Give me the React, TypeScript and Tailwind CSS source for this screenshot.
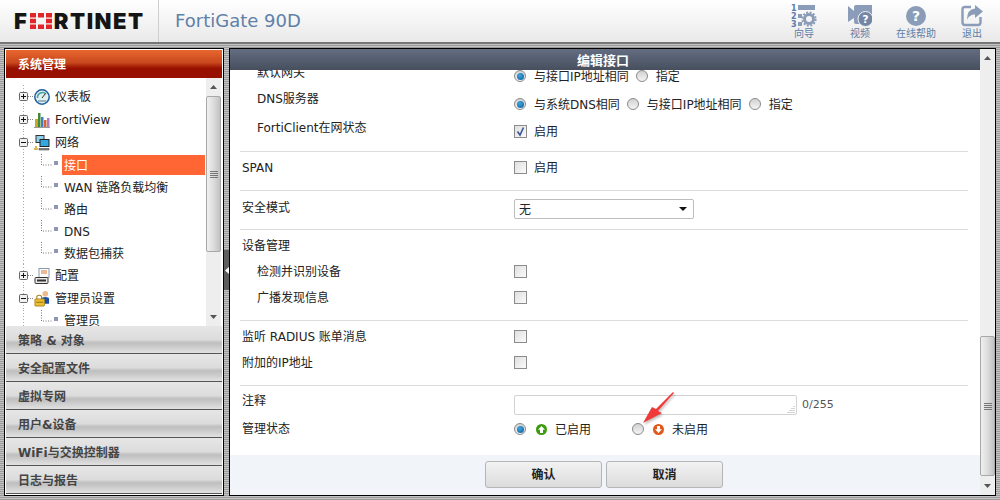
import React from "react";

const FONT = "[font-family:'DejaVu_Sans','Noto_Sans_CJK_SC',sans-serif]";

function Radio({ on }: { on?: boolean }) {
  return (
    <span className="flex h-[12px] w-[12px] shrink-0 items-center justify-center rounded-full border border-[#8a8a8a] bg-gradient-to-b from-[#d2d2d2] to-[#f4f4f4]">
      {on ? <span className="h-[7px] w-[7px] rounded-full bg-[radial-gradient(circle_at_40%_35%,#3fa6df,#0a5a94)]" /> : null}
    </span>
  );
}

function Check({ on }: { on?: boolean }) {
  return (
    <span className="flex h-[13px] w-[13px] shrink-0 items-center justify-center border border-[#8c8c8c] bg-gradient-to-br from-[#dfdfdf] to-[#fbfbfb]">
      {on ? (
        <svg width="11" height="11" viewBox="0 0 11 11">
          <path d="M2.5 5.5 L5 9 L8.5 1.5" fill="none" stroke="#3f5a9c" strokeWidth="1.7" />
        </svg>
      ) : null}
    </span>
  );
}

function Row({ h, left, right }: { h: string; left: React.ReactNode; right: React.ReactNode }) {
  return (
    <div className={`grid grid-cols-[272px_1fr] items-start pl-[12px] ${h}`}>
      {left}
      {right}
    </div>
  );
}

function Hr() {
  return <div className="ml-[10px] mr-[12px] h-px bg-[#dcdcdc]" />;
}

function Arrow({ up }: { up?: boolean }) {
  return (
    <div className="flex h-[18px] shrink-0 items-center justify-center">
      <svg width="7" height="4" viewBox="0 0 7 4">
        {up ? <path d="M0 4 L3.5 0 L7 4 Z" fill="#555" /> : <path d="M0 0 L7 0 L3.5 4 Z" fill="#555" />}
      </svg>
    </div>
  );
}

function Grip() {
  return (
    <div className="flex w-[8px] flex-col gap-[1px]">
      <div className="h-px bg-[#777]" />
      <div className="h-px bg-[#777]" />
      <div className="h-px bg-[#777]" />
      <div className="h-px bg-[#777]" />
    </div>
  );
}

function Thumb({ cls }: { cls: string }) {
  return (
    <div className={`flex shrink-0 items-center justify-center rounded-[2px] border border-[#a8a8a8] bg-gradient-to-r from-[#f0f0f0] via-[#dcdcdc] to-[#c2c2c2] ${cls}`}>
      <Grip />
    </div>
  );
}

function TopGuide({ open, line = true }: { open?: boolean; line?: boolean }) {
  return (
    <svg width="28" height="23" viewBox="0 0 28 23" className="shrink-0">
      {line ? <path d="M17.5 0 V23" stroke="#aaa" strokeDasharray="1 2" /> : null}
      <path d="M22 11.5 H28" stroke="#888" strokeDasharray="1 1" />
      <rect x="13.5" y="7.5" width="8" height="8" rx="1" fill="#f2f2f2" stroke="#666" />
      <path d="M15 11.5 H20" stroke="#111" />
      {open ? null : <path d="M17.5 9 V14" stroke="#111" />}
    </svg>
  );
}

function SubGuide() {
  return (
    <svg width="56" height="22" viewBox="0 0 56 22" className="shrink-0">
      <path d="M17.5 0 V22" stroke="#aaa" strokeDasharray="1 2" />
      <path d="M35.5 0 V11 H46" fill="none" stroke="#777" strokeDasharray="1 1.5" />
      <rect x="48" y="7" width="4" height="4" fill="#8f95b5" />
    </svg>
  );
}

function Top({ icon, label, open, cls }: { icon: React.ReactNode; label: string; open?: boolean; cls: string }) {
  return (
    <div className={`flex items-center ${cls}`}>
      <TopGuide open={open} />
      <span className="flex w-[16px] shrink-0 items-center justify-center">{icon}</span>
      <span className="ml-[5px] whitespace-nowrap text-[#222]">{label}</span>
    </div>
  );
}

function Sub({ label, active, last }: { label: string; active?: boolean; last?: boolean }) {
  return (
    <div className="flex h-[22px] items-center">
      <SubGuide />
      <span className={`mr-px flex h-[20px] flex-1 items-center whitespace-nowrap pl-[2px] ${last ? "" : "pt-[2px]"} ${active ? "bg-[#ff6633] text-white" : "text-[#222]"}`}>{label}</span>
    </div>
  );
}

function Acc({ label }: { label: string }) {
  return (
    <div className="flex h-[28px] items-center border-b border-[#555] bg-[linear-gradient(180deg,#e6e6e6_0%,#dcdcdc_50%,#bfbfbf_62%,#c9c9c9_75%,#e2e2e2_100%)] pl-[12px] pt-[2px] font-bold text-[#444]">
      {label}
    </div>
  );
}

function HeadBtn({ icon, label, cls }: { icon: React.ReactNode; label: string; cls: string }) {
  return (
    <div className={`flex flex-col items-center ${cls}`}>
      <div className="flex h-[24px] items-center justify-center">{icon}</div>
      <span className="whitespace-nowrap text-[10px] leading-[12px] text-[#5d7ea6]">{label}</span>
    </div>
  );
}

function CircleArrow({ up }: { up?: boolean }) {
  return (
    <svg width="11" height="11" viewBox="0 0 11 11" className="shrink-0">
      <circle cx="5.5" cy="5.5" r="5.5" fill={up ? "#3c9a0c" : "#e0581c"} />
      {up ? (
        <path d="M5.5 2 L9 5.8 H7 V9 H4 V5.8 H2 Z" fill="#fff" />
      ) : (
        <path d="M5.5 9 L9 5.2 H7 V2 H4 V5.2 H2 Z" fill="#fff" />
      )}
    </svg>
  );
}

export default function App() {
  return (
    <div className={`relative flex h-[500px] w-[1000px] flex-col overflow-hidden text-[12px] leading-[16px] ${FONT} bg-[repeating-linear-gradient(0deg,#9a9a9a_0,#9a9a9a_1px,#c4c4c4_1px,#c4c4c4_2px)]`}>
      {/* Header */}
      <header className="flex h-[44px] shrink-0 items-center border-b-2 border-[#767676] bg-gradient-to-b from-[#ffffff] to-[#e9e9e9]">
        <div className="flex h-full w-[159px] shrink-0 items-center border-r border-[#cfcfcf] pl-[14px]">
          <span className="[font-family:Inter,sans-serif] text-[22px] font-black leading-none text-[#151515]">F</span>
          <svg width="22" height="16" viewBox="0 0 22 16" className="ml-[3px] shrink-0">
            <path d="M0 0 H6 V4.5 H0 Z M8 0 H14 V4.5 H8 Z M16 0 H22 V4.5 H16 Z M0 5.7 H6 V10.3 H0 Z M16 5.7 H22 V10.3 H16 Z M0 11.5 H6 V16 H0 Z M8 11.5 H14 V16 H8 Z M16 11.5 H22 V16 H16 Z" fill="#e0262a" />
          </svg>
          <span className="ml-[2px] [font-family:Inter,sans-serif] text-[22px] font-black leading-none tracking-[1.5px] text-[#151515]">RTINET</span>
        </div>
        <span className="ml-[16px] text-[18px] text-[#5f80a8]">FortiGate 90D</span>
        <div className="ml-auto flex items-start self-start pt-[4px]">
          <HeadBtn
            cls="w-[56px]"
            label="向导"
            icon={
              <svg width="26" height="24" viewBox="0 0 26 24">
                <text x="0" y="7" fontSize="8" fontWeight="700" fill="#5b7aa8">1</text>
                <text x="0" y="15" fontSize="8" fontWeight="700" fill="#5b7aa8">2</text>
                <text x="0" y="23" fontSize="8" fontWeight="700" fill="#5b7aa8">3</text>
                <path d="M7 1 H24 V6 H7 Z M7 10 H11 V14 H7 Z M7 18 H11 V22 H7 Z" fill="#8a9cb8" />
                <circle cx="18" cy="15" r="4.5" fill="none" stroke="#8a9cb8" strokeWidth="3" />
                <circle cx="18" cy="15" r="6.6" fill="none" stroke="#8a9cb8" strokeWidth="2" strokeDasharray="2 1.5" />
              </svg>
            }
          />
          <HeadBtn
            cls="w-[56px]"
            label="视频"
            icon={
              <svg width="24" height="24" viewBox="0 0 24 24">
                <path d="M0 2 L6 7 V3 Q6 1 8 1 H24 V12 H18 L12 20 H8 Q6 20 6 18 V14 L0 18 Z" fill="#8a9cb8" />
                <circle cx="17.5" cy="15" r="7.5" fill="#7386a5" stroke="#f3f3f3" />
                <text x="17.5" y="19" fontSize="11" fontWeight="700" fill="#fff" textAnchor="middle">?</text>
              </svg>
            }
          />
          <HeadBtn
            cls="w-[56px]"
            label="在线帮助"
            icon={
              <svg width="20" height="20" viewBox="0 0 20 20">
                <circle cx="10" cy="10" r="10" fill="#8a9cb8" />
                <text x="10" y="15" fontSize="14" fontWeight="700" fill="#fff" textAnchor="middle">?</text>
              </svg>
            }
          />
          <HeadBtn
            cls="w-[56px]"
            label="退出"
            icon={
              <svg width="22" height="22" viewBox="0 0 22 22">
                <path d="M10 2 H4 Q1.5 2 1.5 4.5 V17.5 Q1.5 20 4 20 H17 Q19.5 20 19.5 17.5 V12" fill="none" stroke="#8a9cb8" strokeWidth="2.4" />
                <path d="M14 0 L22 6.5 L14 13 V9.5 Q8 9.5 6 15 Q6 4 14 3.5 Z" fill="#8a9cb8" />
              </svg>
            }
          />
        </div>
      </header>

      {/* Body */}
      <div className="flex min-h-0 flex-1 p-[4px]">
        {/* Sidebar */}
        <aside className="flex w-[220px] shrink-0 flex-col overflow-hidden border border-black bg-white p-px">
          <div className="flex h-[28px] shrink-0 items-center bg-[linear-gradient(180deg,#e8672f_0%,#c9481d_45%,#981000_65%,#981000_100%)] pl-[12px] pt-[2px] font-bold text-white">
            系统管理
          </div>
          <div className="flex h-[248px] shrink-0 bg-white">
            <div className="w-[200px] shrink-0 overflow-hidden pt-[7px]">
              <Top
                cls="h-[23px]"
                label="仪表板"
                icon={
                  <svg width="16" height="16" viewBox="0 0 16 16">
                    <circle cx="8" cy="8" r="7.2" fill="#dff0ee" stroke="#1f5f9e" strokeWidth="1.5" />
                    <path d="M3.5 9 A5 5 0 0 1 12 5" fill="none" stroke="#4aa0a0" strokeWidth="1.5" />
                    <path d="M8 9 L11.5 4.5" stroke="#333" />
                    <path d="M4 12 H12" stroke="#7c9ab0" strokeWidth="1.4" />
                  </svg>
                }
              />
              <Top
                cls="h-[23px]"
                label="FortiView"
                icon={
                  <svg width="16" height="16" viewBox="0 0 16 16">
                    <path d="M0 15.5 H16" stroke="#999" />
                    <rect x="1" y="7" width="3" height="8" fill="#c9a52b" />
                    <rect x="4" y="1" width="2.5" height="14" fill="#3f8a3a" />
                    <rect x="7" y="5" width="2.5" height="10" fill="#3d7fc2" />
                    <rect x="10" y="8" width="2.5" height="7" fill="#d8613c" />
                    <rect x="13" y="6" width="2.5" height="9" fill="#b079c8" />
                  </svg>
                }
              />
              <Top
                cls="h-[23px]"
                label="网络"
                open
                icon={
                  <svg width="16" height="16" viewBox="0 0 16 16">
                    <rect x="2" y="0.5" width="8" height="7" fill="#8fd0ef" stroke="#333" />
                    <rect x="6" y="4.5" width="9" height="7" fill="#34a6e0" stroke="#222" />
                    <path d="M5 13.5 H15 V15 H5 Z" fill="#888" stroke="#333" strokeWidth="0.5" />
                    <path d="M0 14 H4 M1 12 H3" stroke="#d2a020" strokeWidth="1.4" />
                  </svg>
                }
              />
              <Sub label="接口" active />
              <Sub label="WAN 链路负载均衡" />
              <Sub label="路由" />
              <Sub label="DNS" />
              <Sub label="数据包捕获" />
              <Top
                cls="h-[23px]"
                label="配置"
                icon={
                  <svg width="16" height="16" viewBox="0 0 16 16">
                    <rect x="5" y="0.5" width="10" height="9" fill="#fafafa" stroke="#8a9ab0" />
                    <path d="M7 3 H13 M7 5 H13" stroke="#e07830" />
                    <rect x="1" y="9.5" width="13" height="6" rx="1" fill="#e8e8e8" stroke="#333" />
                    <rect x="3" y="11.5" width="9" height="2" fill="#333" />
                  </svg>
                }
              />
              <Top
                cls="h-[23px]"
                label="管理员设置"
                open
                icon={
                  <svg width="17" height="17" viewBox="0 0 17 17">
                    <circle cx="12" cy="3.5" r="3" fill="#eeb98c" />
                    <path d="M8 14 V9 Q8 7 12 7 Q16 7 16 9 V14 Z" fill="#1c4fa5" />
                    <path d="M3 9 V7 Q3 5 5.5 5 Q8 5 8 7 V9" fill="none" stroke="#a88320" strokeWidth="1.2" />
                    <rect x="1" y="9" width="10" height="7.5" rx="0.5" fill="#eec02f" stroke="#a88320" />
                    <path d="M2.5 12.5 H9.5" stroke="#8a6a10" />
                  </svg>
                }
              />
              <Sub label="管理员" last />
            </div>
            <div className="flex w-[15px] shrink-0 flex-col bg-[#eeeeee]">
              <Arrow up />
              <Thumb cls="h-[156px]" />
              <div className="flex-1" />
              <Arrow />
            </div>
          </div>
          <Acc label="策略 & 对象" />
          <Acc label="安全配置文件" />
          <Acc label="虚拟专网" />
          <Acc label="用户&设备" />
          <Acc label="WiFi与交换控制器" />
          <Acc label="日志与报告" />
        </aside>

        {/* Collapse handle */}
        <div className="flex w-[5px] shrink-0 flex-col items-center justify-start pt-[202px]">
          <div className="flex h-[40px] w-full items-center justify-center bg-[#5e5e5e]">
            <svg width="4" height="7" viewBox="0 0 4 7">
              <path d="M4 0 L0 3.5 L4 7 Z" fill="#fff" />
            </svg>
          </div>
        </div>

        {/* Main panel */}
        <main className="flex w-[767px] shrink-0 overflow-hidden border border-black bg-white">
          <div className="flex min-w-0 flex-1 flex-col">
            <div className="flex h-[21px] shrink-0 items-center justify-center bg-gradient-to-b from-[#646e82] to-[#474f5e] pr-[4px] pt-[2px] text-[13px] font-bold leading-[14px] text-white">
              编辑接口
            </div>
            <div className="min-h-0 flex-1 overflow-hidden text-[#222]">
              <div className="-mt-[10px]">
                <Row
                  h="h-[30px]"
                  left={<span className="mt-[5px] pl-[15px]">默认网关</span>}
                  right={
                    <div className="mt-[7px] flex items-center">
                      <Radio on />
                      <span className="ml-[8px] mt-[2px]">与接口IP地址相同</span>
                      <span className="ml-[7px]"><Radio /></span>
                      <span className="ml-[8px] mt-[2px]">指定</span>
                    </div>
                  }
                />
                <Row
                  h="h-[28px]"
                  left={<span className="mt-[1px] pl-[15px]">DNS服务器</span>}
                  right={
                    <div className="mt-[5px] flex items-center">
                      <Radio on />
                      <span className="ml-[8px] mt-[2px]">与系统DNS相同</span>
                      <span className="ml-[7px]"><Radio /></span>
                      <span className="ml-[8px] mt-[2px]">与接口IP地址相同</span>
                      <span className="ml-[7px]"><Radio /></span>
                      <span className="ml-[8px] mt-[2px]">指定</span>
                    </div>
                  }
                />
                <Row
                  h="h-[33px]"
                  left={<span className="mt-[2px] pl-[15px]">FortiClient在网状态</span>}
                  right={
                    <div className="mt-[4px] flex items-center">
                      <Check on />
                      <span className="ml-[7px] mt-[2px]">启用</span>
                    </div>
                  }
                />
                <Hr />
                <Row
                  h="h-[38px]"
                  left={<span className="mt-[8px]">SPAN</span>}
                  right={
                    <div className="mt-[6px] flex items-center">
                      <Check />
                      <span className="ml-[7px] mt-[2px]">启用</span>
                    </div>
                  }
                />
                <Hr />
                <Row
                  h="h-[38px]"
                  left={<span className="mt-[9px]">安全模式</span>}
                  right={
                    <div className="mt-[8px] flex h-[20px] w-[180px] items-center justify-between rounded-[2px] border border-[#bdbdbd] pl-[4px] pr-[6px]">
                      <span className="mt-[2px]">无</span>
                      <svg width="8" height="4" viewBox="0 0 8 4">
                        <path d="M0 0 H8 L4 4 Z" fill="#111" />
                      </svg>
                    </div>
                  }
                />
                <Hr />
                <Row h="h-[28px]" left={<span className="mt-[8px]">设备管理</span>} right={<span />} />
                <Row
                  h="h-[26px]"
                  left={<span className="mt-[6px] pl-[15px]">检测并识别设备</span>}
                  right={<div className="mt-[7px]"><Check /></div>}
                />
                <Row
                  h="h-[36px]"
                  left={<span className="mt-[6px] pl-[15px]">广播发现信息</span>}
                  right={<div className="mt-[7px]"><Check /></div>}
                />
                <Hr />
                <Row
                  h="h-[28px]"
                  left={<span className="mt-[8px]">监听 RADIUS 账单消息</span>}
                  right={<div className="mt-[9px]"><Check /></div>}
                />
                <Row
                  h="h-[36px]"
                  left={<span className="mt-[6px]">附加的IP地址</span>}
                  right={<div className="mt-[7px]"><Check /></div>}
                />
                <Hr />
                <Row
                  h="h-[30px]"
                  left={<span className="mt-[7px]">注释</span>}
                  right={
                    <div className="mt-[9px] flex items-end">
                      <div className="flex h-[20px] w-[283px] items-end justify-end rounded-[2px] border border-[#d2d2d2] pb-px pr-px">
                        <svg width="8" height="8" viewBox="0 0 8 8">
                          <path d="M7 1 V2 M5 3 V4 M7 3 V4 M3 5 V6 M5 5 V6 M7 5 V6 M1 7 V8 M3 7 V8 M5 7 V8 M7 7 V8" stroke="#aaa" />
                        </svg>
                      </div>
                      <span className="ml-[5px] pb-[3px] text-[11px] leading-[14px] text-[#555]">0/255</span>
                    </div>
                  }
                />
                <Row
                  h="h-[39px]"
                  left={<span className="mt-[5px]">管理状态</span>}
                  right={
                    <div className="mt-[4px] flex items-center">
                      <Radio on />
                      <span className="ml-[10px]"><CircleArrow up /></span>
                      <span className="ml-[8px] mt-[2px] w-[77px]">已启用</span>
                      <Radio />
                      <span className="ml-[9px]"><CircleArrow /></span>
                      <span className="ml-[8px] mt-[2px]">未启用</span>
                    </div>
                  }
                />
              </div>
            </div>
            <div className="flex h-[40px] shrink-0 items-start justify-center gap-[4px] bg-[#f1f4f9] pr-[2px] pt-[6px]">
              <button className="flex h-[27px] w-[117px] items-center justify-center rounded-[3px] border border-[#b5b5b5] bg-gradient-to-b from-[#f2f2f2] to-[#dcdcdc] font-bold text-[#222]">确认</button>
              <button className="flex h-[27px] w-[117px] items-center justify-center rounded-[3px] border border-[#b5b5b5] bg-gradient-to-b from-[#f2f2f2] to-[#dcdcdc] font-bold text-[#222]">取消</button>
            </div>
          </div>
          <div className="flex w-[15px] shrink-0 flex-col bg-[#eeeeee]">
            <Arrow up />
            <div className="h-[269px] shrink-0" />
            <Thumb cls="h-[140px]" />
            <div className="flex-1" />
            <Arrow />
          </div>
        </main>
      </div>

      {/* Red annotation arrow lies over the form */}
      <svg width="40" height="40" viewBox="0 0 40 40" className="absolute left-[640px] top-[388px] drop-shadow-[1px_2px_1px_rgba(0,0,0,0.25)]">
        <path d="M33 4 L34 5 L18 23 L22 25 L3 35 L12 19 L16 21 Z" fill="#f03a3a" />
      </svg>
    </div>
  );
}
